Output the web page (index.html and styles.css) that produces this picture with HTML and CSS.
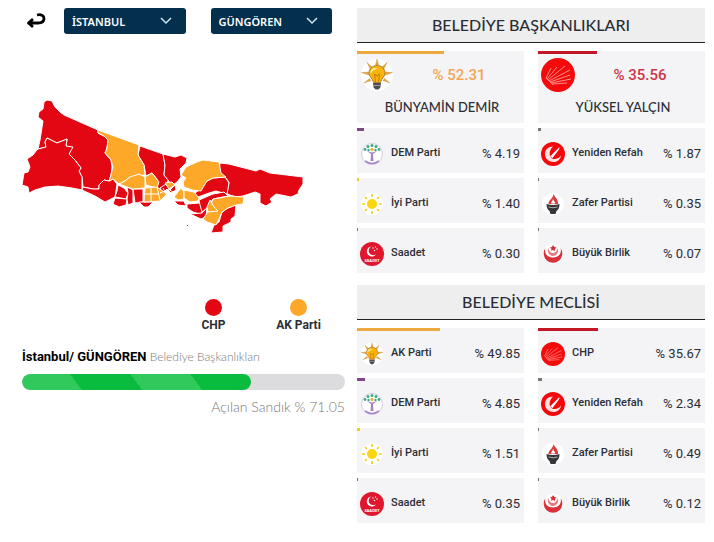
FILE: index.html
```html
<!DOCTYPE html>
<html lang="tr">
<head>
    <meta charset="UTF-8">
    <meta name="viewport" content="width=device-width, initial-scale=1">
    <title>Seçim Sonuçları</title>
    <link rel="stylesheet" href="styles.css">
</head>
<body>
<svg class="sprite" aria-hidden="true">
    <symbol id="logo-akp" viewBox="0 0 34 34">
        <circle cx="17" cy="17" r="16" fill="#fff"/>
        <g fill="#eda63c" stroke="#b98a4c" stroke-width=".4">
            <path d="M17 1l1.500 6h-3zM7 4.500l5 4.500-2 1.700zM27 4.500l-5 4.500 2 1.700zM1.500 14.500l7-.500v3zM32.500 14.500l-7-.500v3zM4 25l5.500-4.500 1.500 2zM30 25l-5.500-4.500-1.500 2z"/>
        </g>
        <path d="M17 7.500c-4.500 0-8 3.300-8 7.500 0 4 3.500 5 4.500 9.500h7c1-4.500 4.500-5.500 4.500-9.500 0-4.200-3.500-7.500-8-7.500z" fill="#f9b50e" stroke="#9c6b16" stroke-width=".8"/>
        <path d="M14 10c-3 1-4 3.500-3.500 6C12 12.500 14.500 11.500 18 10.500z" fill="#fff3a8"/>
        <path d="M15.500 24l-1-8 2.500 2 2.500-2-1 8" fill="none" stroke="#c97b06"/>
        <path d="M13 25h8l-.700 4.500-1.800 2h-3l-1.800-2z" fill="#4c4b52"/>
        <path d="M13.500 27.500h7" stroke="#9d9ba3"/>
    </symbol>
    <symbol id="logo-chp" viewBox="0 0 34 34">
        <circle cx="17" cy="17" r="17" fill="#f50a0c"/>
        <g stroke="#ff9c94" stroke-width=".9" fill="none">
            <path d="M5 20L10 10M6 21L16 9M7 22L24 8M8 23L29 12M9 24l20-7M10 25l20-4M11 26l15-1M5 20l7 7"/>
        </g>
    </symbol>
    <symbol id="logo-dem" viewBox="0 0 24 24">
        <circle cx="12" cy="12" r="10.500" fill="#fff" stroke="#c9b8da" stroke-width=".7"/>
        <g fill="#39ac83">
            <circle cx="5" cy="7.500" r="1.400"/><circle cx="8" cy="4.500" r="1.500"/><circle cx="12" cy="3.500" r="1.500"/>
            <circle cx="16" cy="4.500" r="1.500"/><circle cx="19" cy="7.500" r="1.400"/><circle cx="8.500" cy="8" r="1.200"/><circle cx="15.500" cy="8" r="1.200"/>
        </g>
        <circle cx="12" cy="7.500" r="1.700" fill="#e9b84b"/>
        <path d="M7 9l4 3-.500 7h3L13 12l4-3-5 1.500z" fill="#a685c9"/>
        <path d="M5 19q7 5 14 0" fill="none" stroke="#a685c9" stroke-width="1.700"/>
    </symbol>
    <symbol id="logo-iyi" viewBox="0 0 24 24">
        <circle cx="12" cy="12" r="11" fill="#fff"/>
        <circle cx="12" cy="12" r="5" fill="#fbd50d"/>
        <path d="M12 2v3M12 19v3M2 12h3M19 12h3M5 5l2 2M17 17l2 2M5 19l2-2M17 7l2-2" stroke="#f4d31c" stroke-width="1.700"/>
    </symbol>
    <symbol id="logo-saadet" viewBox="0 0 24 24">
        <circle cx="12" cy="12" r="12" fill="#e0162f"/>
        <path d="M11.500 4.500a5 5 0 1 0 4.500 7.700 4.500 4.500 0 1 1-4.500-7.700z" fill="#fff"/>
        <g fill="#fff"><circle cx="13" cy="6" r=".7"/><circle cx="15.500" cy="5" r=".7"/><circle cx="17" cy="7" r=".7"/><circle cx="14.500" cy="8.500" r=".7"/></g>
        <text x="12" y="20" class="logo-text">SAADET</text>
    </symbol>
    <symbol id="logo-refah" viewBox="0 0 24 24">
        <circle cx="12" cy="12" r="12" fill="#f5080c"/>
        <path d="M12 4.500C6.500 4.500 3.500 8.500 4 13c.500 4 4 7 8.500 7 4 0 7-2.500 7.500-6.500-2 2.500-4.500 4-7.500 3.500C8.500 16.500 6.500 10 12 4.500z" fill="#ffe3df"/>
        <path d="M9 14.500L18.500 5l-.500 2.500L11.500 16z" fill="#fff"/>
    </symbol>
    <symbol id="logo-zafer" viewBox="0 0 24 24">
        <circle cx="12" cy="12" r="11" fill="#fff"/>
        <path d="M12.500 2c1 3 5 5 4.500 10H7.500c0-4.500 4.500-5 5-10z" fill="#dc3a3e"/>
        <path d="M12 7c.500 2 2.500 2.500 2 4.500h-4c0-2 2-2.500 2-4.500z" fill="#fff"/>
        <path d="M5.500 12q6.500 2 13 0c0 4-1.500 6-3 7l-1 3h-5l-1-3c-1.500-1-3-3-3-7z" fill="#38353a"/>
        <path d="M7.500 15q4.500 1.500 9 0" fill="none" stroke="#aaa" stroke-width="1"/>
    </symbol>
    <symbol id="logo-bbp" viewBox="0 0 24 24">
        <circle cx="12" cy="12" r="10" fill="#fff"/>
        <path d="M4.500 6a9.300 9.300 0 1 0 15 0c1.500 5-1.500 9.500-7.500 9.500S3 11 4.500 6z" fill="#d9303a"/>
        <path d="M7 6c-1 5 2 8 5 8s6-3 5-8c-1 3-3 5-5 5S8 9 7 6z" fill="#e57b81"/>
        <path d="M12 3l1.500 2 2 .500-1.500 1.500v2l-2-1-2 1 .500-2L9 5.500l2-.500z" fill="#d9303a"/>
    </symbol>
</svg>

<main class="page">
    <section class="left">
        <div class="toolbar">
            <button class="back" type="button" aria-label="Geri">
                <svg width="20" height="18" viewBox="0 0 20 18">
                    <path d="M11 3c4-1 7 .500 7 3.500S16 11 12 11H3M7 7l-4.500 4L7 15" fill="none" stroke="#000" stroke-width="2.800" stroke-linejoin="round"/>
                </svg>
            </button>
            <select class="select" aria-label="İl">
                <option>İSTANBUL</option>
            </select>
            <select class="select" aria-label="İlçe">
                <option>GÜNGÖREN</option>
            </select>
        </div>

        <svg class="map" viewBox="22 95 323 142" role="img" aria-label="İstanbul ilçe haritası">
            <g class="chp">
                <path d="M38 149L40 140 43 121 38 117 39 112 43 109 44 102 47 100 52 101 55 107 60 112 64 115 98 130 98 133 104 136 108 140 107 148 105 153 111 160 112 167 111 175 109 181 104 180 99 185 99 189 93 189 83 187 82 177 79 171 81 168 75 160 69 154 71 150 66 147 67 139 57 143 47 138 45 142 46 147z"/>
                <path d="M38 149L36 151 33 155 27 159 30 167 28 172 24 173 22 185 28 187 29 193 35 190 45 187 58 186 72 188 82 190 82 177 79 171 81 168 75 160 69 154 73 147 66 146 67 139 57 143 47 138 45 142 46 147z"/>
                <path d="M83 187L93 189 99 189 99 185 104 180 109 181 113 179 117 184 116 191 115 197 105 202 95 196 82 190z"/>
                <path d="M118 185L124 188 128 193 126 199 115 197 117 191z"/>
                <path d="M115 198L127 199 126 205 119 207 113 204z"/>
                <path d="M127 187L133 190 133 203 128 205 127 199 128 193z"/>
                <path d="M133 189L143 189 143 202 135 203z"/>
                <path d="M139 202L153 202 148 207 144 207z"/>
                <path d="M140 146L163 154 165 165 164 175 168 180 166 188 162 192 157 187 157 179 152 173 146 176 144 165 138 155z"/>
                <path d="M163 154L175 157 181 155 187 158 186 163 180 169 181 177 178 181 172 186 168 180 164 175 165 165z"/>
                <path d="M160 188L166 184 170 190 175 185 176 190 171 193 167 189 163 194z"/>
                <path d="M220 163L229 164 256 171 260 169 270 173 303 177 303 184 299 190 298 194 291 197 276 194 270 199 272 202 266 206 260 203 260 194 255 192 243 196 236 197 227 194 229 182 225 177 219 172z"/>
                <path d="M198 191L203 185 207 181 213 178 225 177 229 183 227 194 216 191 209 193 198 197 193 194z"/>
                <path d="M174 201L184 201 186 206 178 205z"/>
                <path d="M187 204L200 203 203 211 200 214 193 212 187 208z"/>
                <path d="M190 214L202 213 207 207 206 217 201 219z"/>
                <path d="M199 200L213 194 224 192 228 196 213 199 209 205 207 208 202 212 200 205z"/>
                <path d="M222 212L228 208 236 205 235 216 231 219 231 222 223 226 223 232 211 233 214 225 219 222z"/>
                <path d="M186 225L189 224 188 227z"/>
            </g>
            <g class="akp">
                <path d="M98 130L139 145 138 155 144 165 145 174 142 176 139 174 133 177 130 177 125 181 119 184 113 179 109 181 111 175 113 167 111 160 105 153 107 148 108 140 104 136 98 133z"/>
                <path d="M119 184L125 181 130 177 139 174 145 177 145 188 133 189 127 187z"/>
                <path d="M145 177L152 173 159 182 157 188 146 185z"/>
                <path d="M145 188L157 187 167 194 160 201 144 202z"/>
                <path d="M165 183L172 182 175 185 169 189z"/>
                <path d="M186 167L197 162 203 160 219 162 221 173 226 177 213 178 207 181 201 191 192 190 184 187 183 182 186 178 181 175z"/>
                <path d="M181 188L184 192 184 199 178 200 174 197z"/>
                <path d="M184 190L194 192 199 198 198 201 190 202 184 198z"/>
                <path d="M213 199L230 196 244 197 243 204 236 205 228 208 222 212 219 219 216 225 207 222 203 219 209 210z"/>
                <path d="M210 200L214 207 218 211 208 212 207 207z"/>
            </g>
            <path class="border" d="M145 194h13M151 188v14M157 187l3 13M160 193l7-3M163 188l4 8M168 189l5 3"/>
        </svg>

        <ul class="legend">
            <li><span class="dot dot-chp"></span>CHP</li>
            <li><span class="dot dot-akp"></span>AK Parti</li>
        </ul>

        <h1 class="place">İstanbul/ GÜNGÖREN <small>Belediye Başkanlıkları</small></h1>
        <div class="progress" role="progressbar" aria-label="Açılan Sandık" aria-valuenow="71.05" aria-valuemin="0" aria-valuemax="100">
            <div class="progress-fill" style="width: 71.05%"></div>
        </div>
        <p class="opened">Açılan Sandık % 71.05</p>
    </section>

    <section class="right">
        <h2 class="heading">BELEDİYE BAŞKANLIKLARI</h2>
        <ul class="results">
            <li class="card big akp-card">
                <span class="bar" style="width: 52.31%"></span>
                <svg class="logo"><use href="#logo-akp"/></svg>
                <span class="percent">% 52.31</span>
                <span class="name">BÜNYAMİN DEMİR</span>
            </li>
            <li class="card big chp-card">
                <span class="bar" style="width: 35.56%"></span>
                <svg class="logo"><use href="#logo-chp"/></svg>
                <span class="percent">% 35.56</span>
                <span class="name">YÜKSEL YALÇIN</span>
            </li>
            <li class="card dem-card">
                <span class="bar" style="width: 4.19%"></span>
                <svg class="logo"><use href="#logo-dem"/></svg>
                <span class="name">DEM Parti</span>
                <span class="percent">% 4.19</span>
            </li>
            <li class="card">
                <span class="bar" style="width: 1.87%"></span>
                <svg class="logo"><use href="#logo-refah"/></svg>
                <span class="name">Yeniden Refah</span>
                <span class="percent">% 1.87</span>
            </li>
            <li class="card iyi-card">
                <span class="bar" style="width: 1.40%"></span>
                <svg class="logo"><use href="#logo-iyi"/></svg>
                <span class="name">İyi Parti</span>
                <span class="percent">% 1.40</span>
            </li>
            <li class="card">
                <span class="bar" style="width: 0.35%"></span>
                <svg class="logo"><use href="#logo-zafer"/></svg>
                <span class="name">Zafer Partisi</span>
                <span class="percent">% 0.35</span>
            </li>
            <li class="card">
                <span class="bar" style="width: 0.30%"></span>
                <svg class="logo"><use href="#logo-saadet"/></svg>
                <span class="name">Saadet</span>
                <span class="percent">% 0.30</span>
            </li>
            <li class="card">
                <span class="bar" style="width: 0.07%"></span>
                <svg class="logo"><use href="#logo-bbp"/></svg>
                <span class="name">Büyük Birlik</span>
                <span class="percent">% 0.07</span>
            </li>
        </ul>

        <h2 class="heading">BELEDİYE MECLİSİ</h2>
        <ul class="results">
            <li class="card akp-card">
                <span class="bar" style="width: 49.85%"></span>
                <svg class="logo"><use href="#logo-akp"/></svg>
                <span class="name">AK Parti</span>
                <span class="percent">% 49.85</span>
            </li>
            <li class="card chp-card">
                <span class="bar" style="width: 35.67%"></span>
                <svg class="logo"><use href="#logo-chp"/></svg>
                <span class="name">CHP</span>
                <span class="percent">% 35.67</span>
            </li>
            <li class="card dem-card">
                <span class="bar" style="width: 4.85%"></span>
                <svg class="logo"><use href="#logo-dem"/></svg>
                <span class="name">DEM Parti</span>
                <span class="percent">% 4.85</span>
            </li>
            <li class="card">
                <span class="bar" style="width: 2.34%"></span>
                <svg class="logo"><use href="#logo-refah"/></svg>
                <span class="name">Yeniden Refah</span>
                <span class="percent">% 2.34</span>
            </li>
            <li class="card iyi-card">
                <span class="bar" style="width: 1.51%"></span>
                <svg class="logo"><use href="#logo-iyi"/></svg>
                <span class="name">İyi Parti</span>
                <span class="percent">% 1.51</span>
            </li>
            <li class="card">
                <span class="bar" style="width: 0.49%"></span>
                <svg class="logo"><use href="#logo-zafer"/></svg>
                <span class="name">Zafer Partisi</span>
                <span class="percent">% 0.49</span>
            </li>
            <li class="card">
                <span class="bar" style="width: 0.35%"></span>
                <svg class="logo"><use href="#logo-saadet"/></svg>
                <span class="name">Saadet</span>
                <span class="percent">% 0.35</span>
            </li>
            <li class="card">
                <span class="bar" style="width: 0.12%"></span>
                <svg class="logo"><use href="#logo-bbp"/></svg>
                <span class="name">Büyük Birlik</span>
                <span class="percent">% 0.12</span>
            </li>
        </ul>
    </section>
</main>
</body>
</html>
```
FILE: styles.css
```css
* {
    box-sizing: border-box;
}
body {
    margin: 0;
    background-color: #fff;
    color: #2b2e35;
    font-family: "Noto Sans", sans-serif;
    font-size: 12px;
}
ul {
    list-style: none;
    margin: 0;
    padding: 0;
}
.sprite {
    display: none;
}
.logo-text {
    font-size: 4px;
    font-weight: bold;
    fill: #fff;
    text-anchor: middle;
}
.page {
    display: grid;
    grid-template-columns: 323fr 348fr;
    gap: 12px;
    padding: 8px 9px 8px 22px;
}

/* sol taraf */
.toolbar {
    display: flex;
    align-items: center;
    height: 26px;
    padding: 0 13px 0 4px;
}
.back {
    display: flex;
    width: 20px;
    margin-right: 18px;
    padding: 0;
    border: none;
    background: none;
    cursor: pointer;
}
.select {
    flex: 1;
    min-width: 0;
    height: 26px;
    padding: 0 8px;
    appearance: none;
    border: none;
    border-radius: 3px;
    background: #04304e url("data:image/svg+xml,%3Csvg xmlns='http://www.w3.org/2000/svg' width='12' height='8'%3E%3Cpath d='M1 1l5 5 5-5' fill='none' stroke='%23cfe6f3' stroke-width='1.500'/%3E%3C/svg%3E") no-repeat right 14px center;
    color: #fff;
    font-family: "Noto Sans", sans-serif;
    font-size: 11px;
    font-weight: 600;
}
.select + .select {
    margin-left: 25px;
}
.map {
    display: block;
    width: 100%;
    margin-top: 61px;
}
.map path {
    stroke: #fff;
    stroke-width: 1;
    stroke-linejoin: round;
}
.chp {
    fill: #e30613;
}
.akp {
    fill: #fda829;
}
.border {
    fill: none;
}
.legend {
    display: flex;
    justify-content: flex-end;
    margin-top: 62px;
    padding-right: 4px;
}
.legend li {
    display: flex;
    flex-direction: column;
    align-items: center;
    gap: 1px;
    width: 85px;
    font-family: Roboto, sans-serif;
    font-weight: bold;
    line-height: 16px;
}
.dot {
    width: 17px;
    height: 17px;
    border-radius: 50%;
}
.dot-chp {
    background-color: #e30613;
}
.dot-akp {
    background-color: #fda829;
}
.place {
    margin: 15px 0 8px;
    color: #000;
    font-family: Roboto, sans-serif;
    font-size: 13px;
    font-weight: bold;
    line-height: 18px;
    white-space: nowrap;
}
.place small {
    color: #777;
    font-family: Lato, sans-serif;
    font-size: 12px;
    font-weight: 300;
}
.progress {
    height: 16px;
    border-radius: 8px;
    background-color: #dcdbde;
    overflow: hidden;
}
.progress-fill {
    height: 100%;
    border-radius: 8px;
    background: repeating-linear-gradient(53deg, #31c95c 0 48px, #09bc3e 48px 96px);
}
.opened {
    margin: 8px 0 0;
    color: #777;
    font-family: Lato, sans-serif;
    font-size: 14px;
    font-weight: 300;
    line-height: 18px;
    text-align: right;
}

/* sonuçlar */
.heading {
    margin: 0 0 8px;
    border-bottom: 1px solid #222;
    background-color: #eeeeef;
    font-family: Lato, sans-serif;
    font-size: 16px;
    font-weight: 500;
    line-height: 34px;
    text-align: center;
}
.results + .heading {
    margin-top: 12px;
}
.results {
    display: grid;
    grid-template-columns: 1fr 1fr;
    gap: 5px 14px;
}
.card {
    display: flex;
    align-items: center;
    position: relative;
    height: 45px;
    padding: 7px 4px 0 3px;
    background-color: #f4f4f6;
}
.bar {
    position: absolute;
    top: 0;
    left: 0;
    min-width: 1px;
    height: 3px;
    background-color: #777;
}
.akp-card .bar {
    background-color: #eda93f;
}
.chp-card .bar {
    background-color: #c21826;
}
.dem-card .bar {
    background-color: #7d4a86;
}
.iyi-card .bar {
    background-color: #e2d321;
}
.logo {
    width: 24px;
    height: 24px;
}
.card .name {
    flex: 1;
    margin-left: 7px;
    padding-bottom: 4px;
    font-family: Roboto, sans-serif;
    font-size: 11px;
    font-weight: 500;
}
.card .percent {
    padding-bottom: 2px;
    font-family: Roboto, sans-serif;
    font-size: 13px;
}
.big {
    flex-wrap: wrap;
    align-content: flex-start;
    height: 72px;
    padding: 7px 0 0 3px;
}
.big .logo {
    width: 34px;
    height: 34px;
}
.big .percent {
    flex: 1;
    padding: 0;
    font-size: 15px;
    font-weight: 500;
    text-align: center;
}
.big .name {
    flex: 0 0 100%;
    margin: 5px 0 0;
    padding: 0;
    font-family: Lato, sans-serif;
    font-size: 13px;
    line-height: 20px;
    text-align: center;
}
.big.akp-card .percent {
    color: #f3a652;
}
.big.chp-card .percent {
    color: #cf3348;
}
```
